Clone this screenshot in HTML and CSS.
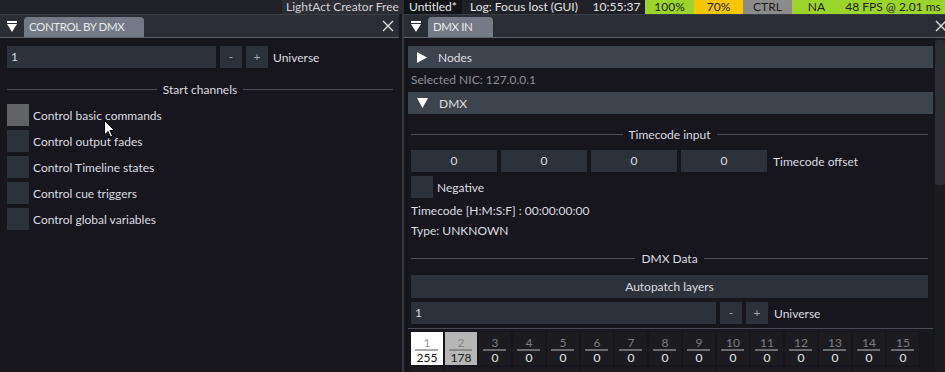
FILE: index.html
```html
<!DOCTYPE html>
<html lang="en">
<head>
    <meta charset="UTF-8">
    <meta name="viewport" content="width=device-width, initial-scale=1.0">
    <title>LightAct - DMX</title>
    <link rel="stylesheet" href="styles.css">
</head>
<body>
    <header class="topbar">
        <span class="brand">LightAct Creator Free</span>
        <span class="file">Untitled*</span>
        <span class="log">Log: Focus lost (GUI)</span>
        <span class="clock">10:55:37</span>
        <span class="stat green">100%</span>
        <span class="stat yellow">70%</span>
        <span class="stat grey">CTRL</span>
        <span class="stat green">NA</span>
        <span class="stat green wide">48 FPS @ 2.01 ms</span>
    </header>

    <div class="workspace">
        <!-- Control by DMX window -->
        <section class="panel panel-left">
            <div class="tabbar">
                <svg class="collapse" width="10" height="11" viewBox="0 0 10 11"><rect x="0" y="0" width="10" height="2" fill="#fff"/><polygon points="0,3 10,3 5,11" fill="#fff"/></svg>
                <div class="tab tab-left">CONTROL BY DMX</div>
                <svg class="close" width="12" height="12" viewBox="0 0 12 12"><path d="M1 1 L11 11 M11 1 L1 11" stroke="#e2e2e2" stroke-width="1.3"/></svg>
            </div>
            <div class="panel-body">
                <div class="field-row">
                    <div class="input input-left">1</div>
                    <div class="btn">-</div>
                    <div class="btn">+</div>
                    <span class="field-label">Universe</span>
                </div>
                <div class="sep sep-start"><span>Start channels</span></div>
                <div class="check-list">
                    <div class="check-row"><span class="checkbox hovered"></span>Control basic commands</div>
                    <div class="check-row"><span class="checkbox"></span>Control output fades</div>
                    <div class="check-row"><span class="checkbox"></span>Control Timeline states</div>
                    <div class="check-row"><span class="checkbox"></span>Control cue triggers</div>
                    <div class="check-row"><span class="checkbox"></span>Control global variables</div>
                </div>
            </div>
        </section>

        <!-- DMX In window -->
        <section class="panel panel-right">
            <div class="tabbar">
                <svg class="collapse" width="10" height="11" viewBox="0 0 10 11"><rect x="0" y="0" width="10" height="2" fill="#fff"/><polygon points="0,3 10,3 5,11" fill="#fff"/></svg>
                <div class="tab tab-right">DMX IN</div>
                <svg class="close close-right" width="12" height="12" viewBox="0 0 12 12"><path d="M1 1 L11 11 M11 1 L1 11" stroke="#e2e2e2" stroke-width="1.3"/></svg>
            </div>
            <div class="panel-body scroll-body">
                <div class="scroll-content">
                    <div class="header">
                        <svg width="10" height="11" viewBox="0 0 10 11"><polygon points="0,0 10,5.5 0,11" fill="#fff"/></svg>
                        <span>Nodes</span>
                    </div>
                    <div class="muted">Selected NIC: 127.0.0.1</div>
                    <div class="header header-dmx">
                        <svg width="11" height="10" viewBox="0 0 11 10"><polygon points="0,0 11,0 5.5,10" fill="#fff"/></svg>
                        <span>DMX</span>
                    </div>

                    <div class="inner">
                        <div class="sep sep-timecode"><span>Timecode input</span></div>
                        <div class="field-row tc-row">
                            <div class="input num">0</div>
                            <div class="input num">0</div>
                            <div class="input num">0</div>
                            <div class="input num">0</div>
                            <span class="field-label">Timecode offset</span>
                        </div>
                        <div class="check-row negative"><span class="checkbox"></span>Negative</div>
                        <div class="text-line tc-text">Timecode [H:M:S:F] : 00:00:00:00</div>
                        <div class="text-line">Type: UNKNOWN</div>

                        <div class="sep sep-data"><span>DMX Data</span></div>
                        <div class="wide-btn">Autopatch layers</div>
                        <div class="field-row uni-row">
                            <div class="input input-right">1</div>
                            <div class="btn">-</div>
                            <div class="btn">+</div>
                            <span class="field-label">Universe</span>
                        </div>
                    </div>
                    <div class="rule"></div>
                    <div class="channels">
                        <div class="cell on"><span class="ch">1</span><span class="bar"></span><span class="val">255</span></div>
                        <div class="cell half"><span class="ch">2</span><span class="bar"></span><span class="val">178</span></div>
                        <div class="cell"><span class="ch">3</span><span class="bar"></span><span class="val">0</span></div>
                        <div class="cell"><span class="ch">4</span><span class="bar"></span><span class="val">0</span></div>
                        <div class="cell"><span class="ch">5</span><span class="bar"></span><span class="val">0</span></div>
                        <div class="cell"><span class="ch">6</span><span class="bar"></span><span class="val">0</span></div>
                        <div class="cell"><span class="ch">7</span><span class="bar"></span><span class="val">0</span></div>
                        <div class="cell"><span class="ch">8</span><span class="bar"></span><span class="val">0</span></div>
                        <div class="cell"><span class="ch">9</span><span class="bar"></span><span class="val">0</span></div>
                        <div class="cell"><span class="ch">10</span><span class="bar"></span><span class="val">0</span></div>
                        <div class="cell"><span class="ch">11</span><span class="bar"></span><span class="val">0</span></div>
                        <div class="cell"><span class="ch">12</span><span class="bar"></span><span class="val">0</span></div>
                        <div class="cell"><span class="ch">13</span><span class="bar"></span><span class="val">0</span></div>
                        <div class="cell"><span class="ch">14</span><span class="bar"></span><span class="val">0</span></div>
                        <div class="cell"><span class="ch">15</span><span class="bar"></span><span class="val">0</span></div>
                        <!-- next row, scrolled below the fold -->
                        <div class="cell"></div>
                        <div class="cell"></div>
                        <div class="cell"></div>
                        <div class="cell"></div>
                        <div class="cell"></div>
                        <div class="cell"></div>
                        <div class="cell"></div>
                        <div class="cell"></div>
                        <div class="cell"></div>
                        <div class="cell"></div>
                        <div class="cell"></div>
                        <div class="cell"></div>
                        <div class="cell"></div>
                        <div class="cell"></div>
                        <div class="cell"></div>
                    </div>
                </div>
                <div class="scrollbar"><div class="thumb"></div></div>
            </div>
        </section>
    </div>

    <!-- mouse pointer over the first checkbox label -->
    <svg class="cursor" width="12" height="18" viewBox="0 0 12 18"><path d="M0.5 0.5 L0.5 15 L4 11.5 L6.5 17 L8.5 16 L6 10.5 L10.5 10.5 Z" fill="#fff" stroke="#000" stroke-width="1"/></svg>
</body>
</html>
```

FILE: styles.css
```css
* {
    margin: 0;
    padding: 0;
    box-sizing: border-box;
}

body {
    width: 945px;
    height: 372px;
    overflow: hidden;
    position: relative;
    background-color: #17161c;
    color: #dcdde0;
    font-family: Lato, "Noto Sans", sans-serif;
    font-size: 12px;
}

/* Top status bar */
.topbar {
    height: 14px;
    display: flex;
    justify-content: flex-end;
    background-color: #1f2126;
    font-size: 12px;
    line-height: 14px;
    white-space: nowrap;
}

.topbar span {
    display: block;
    overflow: hidden;
}

.brand {
    width: 122px;
    padding-left: 4px;
    background-color: #2b2d32;
    color: #d2d3d6;
}

.file {
    width: 58px;
    padding-left: 5px;
    background-color: #121316;
    color: #e4e4e4;
}

.log {
    width: 126px;
    padding-left: 8px;
    color: #e4e4e4;
}

.clock {
    width: 57px;
    text-align: center;
    color: #e4e4e4;
}

.stat {
    width: 49px;
    text-align: center;
    color: #1b1b1b;
}

.stat.wide {
    width: 104px;
}

.green {
    background-color: #9bd52b;
}

.yellow {
    background-color: #f6c700;
}

.grey {
    background-color: #8b8b8b;
}

/* Windows */
.workspace {
    display: flex;
    height: 358px;
}

.panel {
    display: flex;
    flex-direction: column;
    overflow: hidden;
}

.panel-left {
    width: 399px;
    margin-right: 3px;
}

.panel-right {
    flex: 1;
    border-left: 2px solid #36383e;
}

.tabbar {
    display: flex;
    height: 24px;
    flex-shrink: 0;
    background-color: #2a2d33;
    border-top: 1px solid #3a3d44;
    border-bottom: 1px solid #5e636c;
}

.collapse {
    align-self: center;
    margin: 1px 7px 0 7px;
}

.tab {
    align-self: flex-end;
    height: 20px;
    padding-left: 5px;
    background-color: #737a85;
    border-radius: 4px 4px 0 0;
    color: #e6e8eb;
    font-size: 11.5px;
    letter-spacing: -0.4px;
    line-height: 20px;
    white-space: nowrap;
}

.tab-left {
    width: 120px;
}

.tab-right {
    width: 65px;
}

.close {
    align-self: center;
    margin-left: auto;
    margin-right: 5px;
}

.close-right {
    margin-right: -2px;
    flex-shrink: 0;
}

.panel-body {
    flex: 1;
    padding: 8px 6px 0 7px;
    background-color: #17161c;
}

/* Form pieces */
.field-row {
    display: flex;
    align-items: center;
    gap: 4px;
    height: 22px;
}

.input {
    height: 22px;
    padding-left: 4px;
    background-color: #2d3139;
    line-height: 22px;
}

.input-left {
    width: 209px;
}

.input-right {
    width: 305px;
}

.input.num {
    width: 86px;
    padding: 0;
    text-align: center;
}

.btn {
    width: 22px;
    height: 22px;
    background-color: #2d3139;
    color: #a6a9af;
    text-align: center;
    line-height: 22px;
}

.field-label {
    margin-left: 1px;
}

.sep {
    display: flex;
    align-items: center;
    gap: 6px;
    height: 16px;
}

.sep::before,
.sep::after {
    content: "";
    flex: 1;
    height: 1px;
    background-color: #4b4e56;
}

.sep-start {
    margin-top: 13px;
}

.check-list {
    margin-top: 7px;
    display: flex;
    flex-direction: column;
    gap: 4px;
}

.check-row {
    display: flex;
    align-items: center;
    gap: 4px;
    height: 22px;
}

.checkbox {
    width: 22px;
    height: 22px;
    background-color: #2d3139;
}

.checkbox.hovered {
    background-color: #616266;
}

/* Right window content */
.scroll-body {
    display: flex;
    padding: 0;
}

.scroll-content {
    flex: 1;
    padding: 8px 2px 0 4px;
}

.scrollbar {
    width: 10px;
    padding-top: 2px;
    background-color: #1b1c20;
}

.thumb {
    height: 145px;
    border-radius: 3px;
    background-color: #2c2e33;
}

.header {
    display: flex;
    align-items: center;
    height: 22px;
    padding-left: 9px;
    gap: 11px;
    background-color: #3e444d;
}

.header-dmx {
    margin-top: 4px;
}

.muted {
    height: 16px;
    margin-top: 4px;
    padding-left: 3px;
    color: #8c8f96;
    line-height: 16px;
}

.inner {
    margin: 0 5px 0 3px;
}

.sep-timecode {
    margin-top: 12px;
}

.tc-row {
    margin-top: 8px;
}

.tc-row .field-label {
    margin-left: 2px;
}

.negative {
    margin-top: 4px;
}

.text-line {
    height: 16px;
    margin-top: 4px;
    line-height: 16px;
}

.tc-text {
    margin-top: 5px;
}

.sep-data {
    margin-top: 11px;
}

.wide-btn {
    height: 23px;
    margin-top: 9px;
    background-color: #2d3139;
    text-align: center;
    line-height: 23px;
}

.uni-row {
    margin-top: 4px;
}

.uni-row .field-label {
    margin-left: 2px;
}

.rule {
    height: 1px;
    margin-top: 4px;
    background-color: #4b4e56;
}

/* DMX channel grid */
.channels {
    display: grid;
    grid-template-columns: repeat(15, 32px);
    column-gap: 2px;
    row-gap: 2px;
    margin: 3px 0 0 3px;
}

.cell {
    display: flex;
    flex-direction: column;
    height: 33px;
    background-color: #1c1c20;
    text-align: center;
}

.ch {
    padding-top: 4px;
    line-height: 13px;
    color: #7c7d80;
}

.bar {
    height: 2px;
    margin: 0 5px 0 4px;
    background-color: #6b6c6f;
}

.val {
    line-height: 13px;
    color: #e6e6e6;
}

.cell.on {
    background-color: #ffffff;
}

.cell.on .ch {
    color: #9a9a9a;
}

.cell.on .bar {
    background-color: #a8a8a8;
}

.cell.on .val {
    color: #111;
}

.cell.half {
    background-color: #b6b6b6;
}

.cell.half .ch {
    color: #858585;
}

.cell.half .bar {
    background-color: #8a8a8a;
}

.cell.half .val {
    color: #1b1b1b;
}

.cursor {
    position: absolute;
    left: 104px;
    top: 120px;
}
```
